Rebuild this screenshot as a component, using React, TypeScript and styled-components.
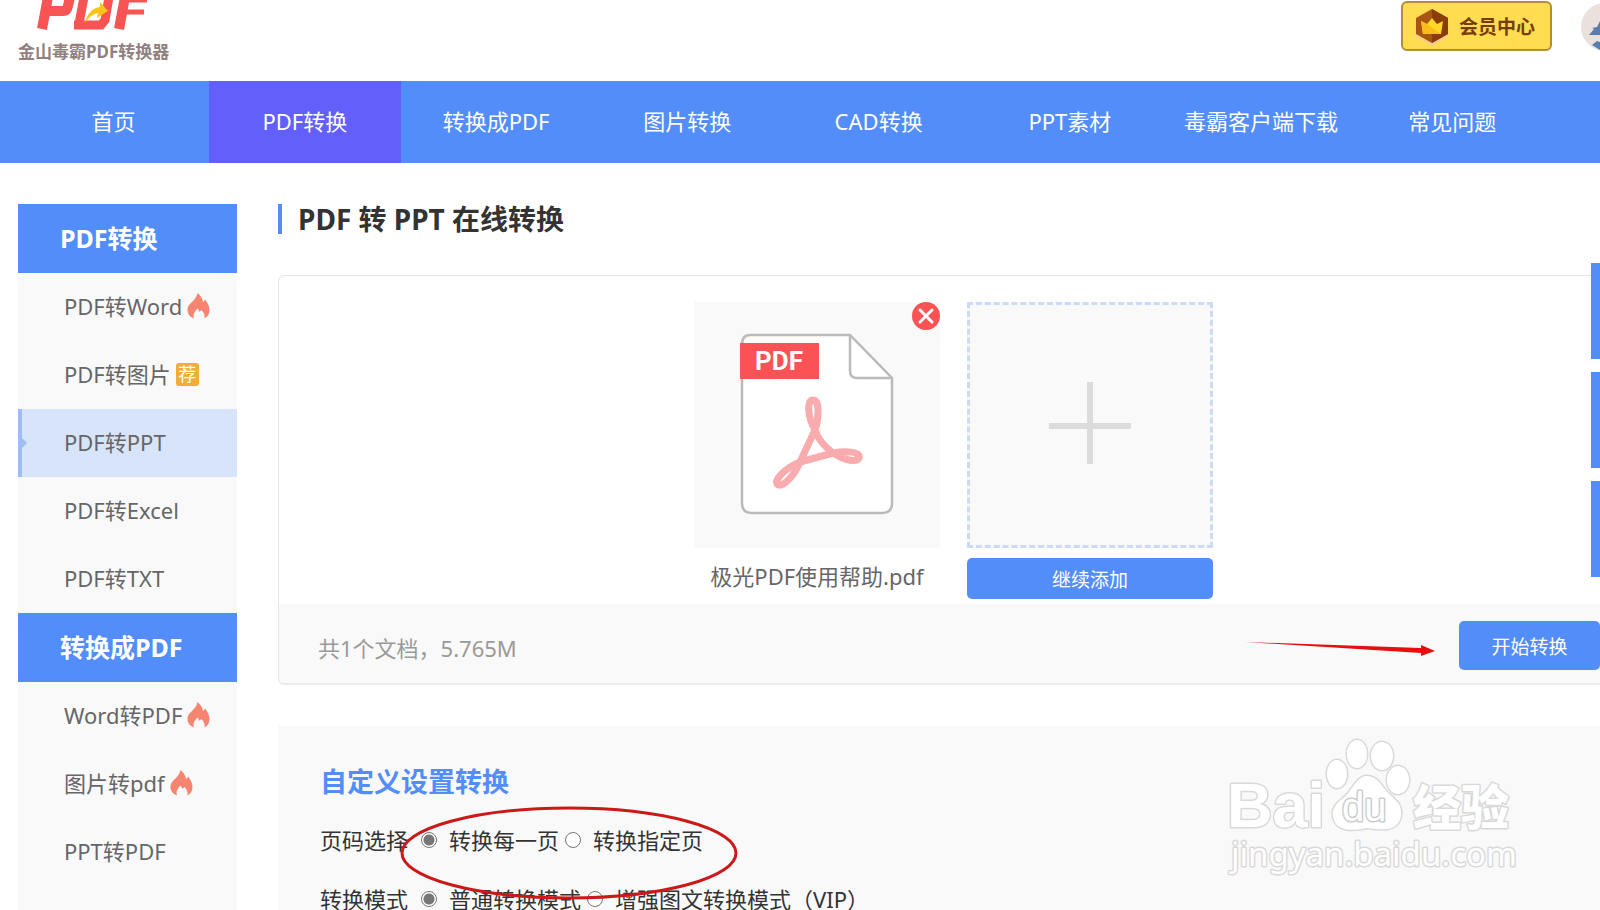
import React from "react";
import styled, { createGlobalStyle, css } from "styled-components";

const GlobalStyle = createGlobalStyle`
  *, *::before, *::after { box-sizing: border-box; }
  body {
    margin: 0;
    background: #fff;
    color: #333;
    font-family: "Noto Sans", "Noto Sans CJK SC", sans-serif;
    font-size: 22px;
    line-height: 30px;
  }
  a { color: inherit; text-decoration: none; }
  button { font-family: inherit; cursor: pointer; }
  ul, h1, h2, p { margin: 0; padding: 0; }
  ul { list-style: none; }
`;

const Page = styled.div`
  position: relative;
  display: flex;
  flex-direction: column;
  height: 100vh;
  overflow: hidden;
`;

const Header = styled.header`
  flex: none;
  height: 81px;
  padding-left: 18px;
  display: flex;
  justify-content: space-between;
`;

const Logo = styled.a`
  display: flex;
  flex-direction: column;
  align-items: flex-start;
`;

const LogoMark = styled.svg`
  display: block;
  width: 130px;
  height: 40px;
  margin-left: 16px;
`;

const LogoName = styled.span`
  color: #91807e;
  font-size: 17px;
  font-weight: 700;
  line-height: 24px;
`;

const Account = styled.div`
  display: flex;
  align-items: flex-start;
  gap: 29px;
  padding-top: 1px;
  margin-right: -29px;
`;

const VipButton = styled.button`
  display: flex;
  align-items: center;
  gap: 9px;
  width: 151px;
  height: 50px;
  padding: 0 0 0 11px;
  border: 2px solid #b48c3a;
  border-radius: 6px;
  background: #ffdc50;
  color: #783c0a;
  font-size: 19px;
  font-weight: 700;
`;

const Avatar = styled.svg`
  width: 48px;
  height: 48px;
  margin-top: 2px;
`;

const Nav = styled.nav`
  flex: none;
  display: flex;
  height: 82px;
  padding: 0 52px 0 18px;
  background: #538df9;
`;

const NavLink = styled.a<{ $active?: boolean }>`
  flex: 1 1 0;
  display: flex;
  align-items: center;
  justify-content: center;
  padding-bottom: 2px;
  color: #fff;
  white-space: nowrap;
  background: ${(p) => (p.$active ? "#635ffb" : "transparent")};
`;

const Body = styled.div`
  flex: 1;
  display: flex;
  gap: 41px;
  padding: 41px 0 0 18px;
`;

const Sidebar = styled.aside`
  flex: none;
  width: 219px;
  background: #f9f9f9;
`;

const GroupTitle = styled.h2`
  height: 69px;
  padding-left: 42px;
  background: #538df9;
  color: #fff;
  font-size: 25px;
  line-height: 68px;
`;

const MenuLink = styled.a<{ $active?: boolean }>`
  position: relative;
  display: flex;
  align-items: center;
  gap: 5px;
  height: 68px;
  padding: 0 0 2px 46px;
  color: #666;
  white-space: nowrap;
  ${(p) =>
    p.$active &&
    css`
      background: #d8e4fa;
      box-shadow: inset 4px 0 #9dbcf9;
      &::before {
        content: "";
        position: absolute;
        left: 4px;
        top: 29px;
        border: 5px solid transparent;
        border-left-color: #9dbcf9;
      }
    `}
`;

const FlameIcon = styled.svg`
  width: 23px;
  height: 26px;
`;

const Badge = styled.span`
  width: 23px;
  height: 23px;
  border-radius: 3px;
  background: #f2ad34;
  color: #fff;
  font-size: 18px;
  line-height: 22px;
  text-align: center;
`;

const Main = styled.main`
  flex: 1;
  min-width: 0;
  margin-right: -29px;
`;

const Title = styled.h1`
  height: 30px;
  padding-left: 16px;
  border-left: 4px solid #538df9;
  font-size: 28px;
  line-height: 30px;
`;

const Card = styled.section`
  margin-top: 41px;
  border: 1px solid #e6e6e6;
  border-bottom: 2px solid #ececec;
  border-radius: 6px;
  overflow: hidden;
`;

const Files = styled.div`
  display: flex;
  justify-content: center;
  gap: 27px;
  padding: 26px 0 5px;
`;

const FileColumn = styled.div`
  width: 246px;
  display: flex;
  flex-direction: column;
  gap: 10px;
`;

const Preview = styled.div`
  position: relative;
  height: 246px;
  padding-top: 31px;
  background: #f9f9f9;
`;

const PdfIcon = styled.svg`
  display: block;
  width: 154px;
  height: 182px;
  margin: 0 auto;
`;

const RemoveButton = styled.button`
  position: absolute;
  top: 0;
  right: 0;
  width: 28px;
  height: 28px;
  padding: 0;
  border: 0;
  border-radius: 50%;
  background: #fa5255;
  svg { display: block; }
`;

const FileName = styled.p`
  height: 41px;
  color: #666;
  line-height: 36px;
  text-align: center;
  white-space: nowrap;
`;

const DropTile = styled.button`
  display: flex;
  align-items: center;
  justify-content: center;
  height: 246px;
  padding: 0 0 2px;
  border: 3px dashed #ccdaf5;
  background: #f9f9f9;
`;

const Button = styled.button`
  height: 41px;
  padding: 0;
  border: 0;
  border-radius: 5px;
  background: #538df9;
  color: #fff;
  font-size: 19px;
`;

const StartButton = styled(Button)`
  width: 141px;
  height: 49px;
`;

const CardFooter = styled.div`
  display: flex;
  align-items: center;
  justify-content: space-between;
  height: 79px;
  padding: 4px 28px 0 39px;
  background: #f9f9f9;
`;

const Summary = styled.p`
  color: #999;
  padding-top: 4px;
`;

const StartArea = styled.div`
  display: flex;
  align-items: center;
  gap: 24px;
`;

const Arrow = styled.svg`
  width: 190px;
  height: 16px;
  margin-top: 6px;
`;

const Settings = styled.section`
  position: relative;
  height: 400px;
  margin-top: 41px;
  padding: 41px 42px 0;
  background: #f9f9f9;
`;

const SettingsTitle = styled.h2`
  margin-bottom: 13px;
  color: #538df9;
  font-size: 27px;
  line-height: 30px;
`;

const OptionRow = styled.fieldset`
  display: flex;
  align-items: center;
  gap: 6px;
  height: 59px;
  margin: 0;
  padding: 0;
  border: 0;
  white-space: nowrap;
`;

const OptionName = styled.span`
  margin-right: 7px;
`;

const Option = styled.label`
  display: flex;
  align-items: center;
  gap: 12px;
`;

const Radio = styled.input`
  appearance: none;
  width: 16px;
  height: 16px;
  margin: 0;
  border: 1px solid #767676;
  border-radius: 50%;
  background: #fff;
  &:checked {
    background: radial-gradient(circle, #767676 5px, #fff 6px);
  }
`;

const Ellipse = styled.svg`
  position: absolute;
  left: 121px;
  top: 80px;
  width: 340px;
  height: 94px;
  pointer-events: none;
`;

const Watermark = styled.svg`
  position: absolute;
  right: 110px;
  top: 9px;
  width: 300px;
  height: 145px;
  pointer-events: none;
`;

const FloatBar = styled.div`
  position: absolute;
  right: 0;
  top: 263px;
  display: flex;
  flex-direction: column;
  gap: 13px;
`;

const FloatButton = styled.button`
  width: 9px;
  height: 96px;
  padding: 0;
  border: 0;
  background: #538df9;
`;

const Flame = () => (
  <FlameIcon viewBox="0 0 23 26" aria-hidden="true">
    <path
      d="M10.500 0C13 2 15.500 5 16 9c1-.4 1.600-1.300 2-2.500 2.500 3 4.500 6.500 4.500 10.500 0 4-2 7-5 8.500.7-3.500-.8-6.500-3.200-8.500-.8 1.200-1.600 1.600-2.300 1.600-.2-1.400-.8-2.300-1.500-3-2.500 2.500-5 6-3.500 9.900C3 24 .5 21 .5 17c0-4 2.500-6 4-7.500C7 7 10 4 10.500 0Z"
      fill="#f58570"
    />
  </FlameIcon>
);

type Item = { label: string; mark?: "hot" | "rec"; active?: boolean };

const groups: { title: string; items: Item[] }[] = [
  {
    title: "PDF转换",
    items: [
      { label: "PDF转Word", mark: "hot" },
      { label: "PDF转图片", mark: "rec" },
      { label: "PDF转PPT", active: true },
      { label: "PDF转Excel" },
      { label: "PDF转TXT" },
    ],
  },
  {
    title: "转换成PDF",
    items: [
      { label: "Word转PDF", mark: "hot" },
      { label: "图片转pdf", mark: "hot" },
      { label: "PPT转PDF" },
    ],
  },
];

const navItems = ["首页", "PDF转换", "转换成PDF", "图片转换", "CAD转换", "PPT素材", "毒霸客户端下载", "常见问题"];

const settings = [
  { name: "页码选择", key: "pages", options: ["转换每一页", "转换指定页"] },
  { name: "转换模式", key: "mode", options: ["普通转换模式", "增强图文转换模式（VIP）"] },
];

export default function App() {
  return (
    <Page>
      <GlobalStyle />
      <Header>
        <Logo href="#">
          <LogoMark viewBox="0 0 130 40" aria-hidden="true">
            <g fill="none" stroke="#f95454" strokeWidth="10">
              <path d="M8 29 14-3M12 11H29Q33 11 34 6L36-3" />
              <path d="M44 29 50-3M40 25H67L71 20 75-3" strokeWidth="9" />
              <path d="M88 12H110M92 0H113" strokeWidth="5" />
              <path d="M85 29 91-3" />
            </g>
            <path d="M51 23C53 13 59 8 66 7L66 2 74 11 63 18 64 13C59 14 55 17 51 23Z" fill="#fdc316" />
          </LogoMark>
          <LogoName>金山毒霸PDF转换器</LogoName>
        </Logo>
        <Account>
          <VipButton type="button">
            <svg width="36" height="40" viewBox="0 0 36 40" aria-hidden="true">
              <path d="M18 5 34 13V31L18 40 2 31V13Z" fill="#f7cf8a" />
              <path d="M18 3 34 12V28L18 37 2 28V12Z" fill="#a85413" />
              <path d="M18 3 34 12V28L18 37Z" fill="#8a3d09" />
              <path d="M7 15 13 18 18 12 23 18 29 15 27 28H9Z" fill="#ffd829" />
              <path d="M13 18 27 28H9L7 15Z" fill="#f9bd1a" />
            </svg>
            会员中心
          </VipButton>
          <Avatar viewBox="0 0 48 48" aria-hidden="true">
            <circle cx="24" cy="24" r="24" fill="#eae1dc" />
            <path d="M8 32 13 26 11 25 16 24 19 18V32ZM11 42 16 38 19 39V47Z" fill="#577eae" />
          </Avatar>
        </Account>
      </Header>
      <Nav>
        {navItems.map((n) => (
          <NavLink key={n} href="#" $active={n === "PDF转换"}>{n}</NavLink>
        ))}
      </Nav>
      <Body>
        <Sidebar>
          {groups.map((g) => (
            <React.Fragment key={g.title}>
              <GroupTitle>{g.title}</GroupTitle>
              <ul>
                {g.items.map((i) => (
                  <li key={i.label}>
                    <MenuLink href="#" $active={i.active}>
                      {i.label}
                      {i.mark === "hot" && <Flame />}
                      {i.mark === "rec" && <Badge>荐</Badge>}
                    </MenuLink>
                  </li>
                ))}
              </ul>
            </React.Fragment>
          ))}
        </Sidebar>
        <Main>
          <Title>PDF 转 PPT 在线转换</Title>
          <Card>
            <Files>
              <FileColumn>
                <Preview>
                  <PdfIcon viewBox="0 0 154 182" aria-hidden="true">
                    <path d="M10 2H110L152 45V170Q152 180 142 180H12Q2 180 2 170V12Q2 2 10 2Z" fill="#fff" stroke="#bababa" strokeWidth="2.500" />
                    <path d="M110 2V38Q110 45 117 45H152" fill="none" stroke="#bababa" strokeWidth="2.500" />
                    <rect x="0" y="10" width="79" height="36" fill="#fa5255" />
                    <text x="39" y="37" textAnchor="middle" fill="#fff" fontFamily="Roboto, sans-serif" fontWeight="700" fontSize="26">PDF</text>
                    <path
                      d="M75 97C68 85 66 67 73 67 80 67 79 85 75 97 78 106 85 114 93 120 103 127 117 130 119 125 121 118 105 118 93 120L60 129C45 135 34 147 37 151 42 156 54 143 60 129Z"
                      fill="none"
                      stroke="#f9abae"
                      strokeWidth="7"
                      strokeLinejoin="round"
                    />
                  </PdfIcon>
                  <RemoveButton type="button" aria-label="删除">
                    <svg width="28" height="28" viewBox="0 0 28 28">
                      <path d="M8 8 20 20M20 8 8 20" stroke="#fff" strokeWidth="3" strokeLinecap="round" />
                    </svg>
                  </RemoveButton>
                </Preview>
                <FileName>极光PDF使用帮助.pdf</FileName>
              </FileColumn>
              <FileColumn>
                <DropTile type="button" aria-label="添加文件">
                  <svg width="82" height="84" viewBox="0 0 82 84">
                    <path d="M41 0V82M0 44H82" stroke="#dcdcdc" strokeWidth="6" />
                  </svg>
                </DropTile>
                <Button type="button">继续添加</Button>
              </FileColumn>
            </Files>
            <CardFooter>
              <Summary>共1个文档，5.765M</Summary>
              <StartArea>
                <Arrow viewBox="0 0 190 16" aria-hidden="true">
                  <path d="M0 1 176 7V4L190 10 176 15V12Z" fill="#e60f0f" />
                </Arrow>
                <StartButton type="button">开始转换</StartButton>
              </StartArea>
            </CardFooter>
          </Card>
          <Settings>
            <SettingsTitle>自定义设置转换</SettingsTitle>
            {settings.map((s) => (
              <OptionRow key={s.key} aria-label={s.name}>
                <OptionName>{s.name}</OptionName>
                {s.options.map((o, i) => (
                  <Option key={o}>
                    <Radio type="radio" name={s.key} defaultChecked={i === 0} />
                    {o}
                  </Option>
                ))}
              </OptionRow>
            ))}
            <Ellipse viewBox="0 0 340 94" aria-hidden="true">
              <ellipse cx="170" cy="47" rx="167" ry="45" fill="none" stroke="#cb1919" strokeWidth="3" />
            </Ellipse>
            <Watermark viewBox="0 0 300 145" aria-hidden="true">
              <g fill="#fff" stroke="#d9d9d9" strokeWidth="3" paintOrder="stroke" strokeLinejoin="round">
                <text x="8" y="92" fontFamily="Liberation Sans, sans-serif" fontWeight="700" fontSize="63">Bai</text>
                <ellipse cx="118" cy="39" rx="10" ry="14" />
                <ellipse cx="138" cy="19" rx="10" ry="14" />
                <ellipse cx="163" cy="21" rx="11" ry="14" />
                <ellipse cx="179" cy="45" rx="11" ry="14" />
                <path d="M148 41C158 41 162 50 168 57 175 64 184 69 182 81 179 97 163 95 148 93 133 96 117 97 114 82 112 69 124 65 130 57 136 49 140 41 148 41Z" />
                <text x="123" y="86" fontFamily="Liberation Sans, sans-serif" fontSize="40" stroke="#cccccc">du</text>
                <text x="194" y="90" fontFamily="Noto Sans CJK SC, sans-serif" fontWeight="900" fontSize="48">经验</text>
                <text x="12" y="131" fontFamily="Noto Sans, sans-serif" fontSize="33">jingyan.baidu.com</text>
              </g>
            </Watermark>
          </Settings>
        </Main>
      </Body>
      <FloatBar>
        <FloatButton type="button" aria-label="客服" />
        <FloatButton type="button" aria-label="反馈" />
        <FloatButton type="button" aria-label="返回顶部" />
      </FloatBar>
    </Page>
  );
}
